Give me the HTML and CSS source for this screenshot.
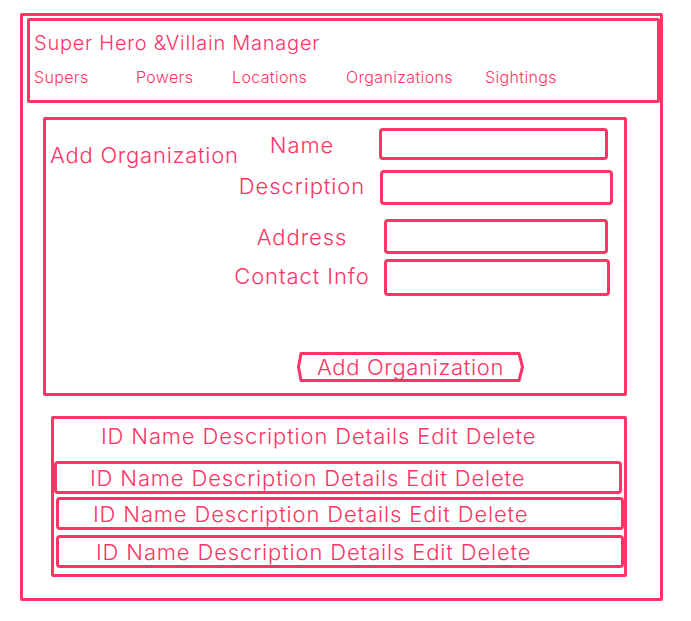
FILE: index.html
```html
<!DOCTYPE html>
<html lang="en">
<head>
<meta charset="utf-8">
<title>Super Hero &amp; Villain Manager</title>
<link rel="stylesheet" href="styles.css">
</head>
<body>
<div class="frame">
  <header class="header">
    <div class="title">Super Hero &amp;Villain Manager</div>
    <nav class="nav">
      <span>Supers</span>
      <span>Powers</span>
      <span>Locations</span>
      <span>Organizations</span>
      <span>Sightings</span>
    </nav>
  </header>

  <section class="form">
    <div class="form-heading">Add Organization</div>
    <div class="fields">
      <div class="row row1"><span class="label">Name</span><span class="input"></span></div>
      <div class="row row2"><span class="label">Description</span><span class="input"></span></div>
      <div class="row row3"><span class="label">Address</span><span class="input"></span></div>
      <div class="row row4"><span class="label">Contact Info</span><span class="input"></span></div>
      <div class="button">
        <svg class="button-shape" viewBox="0 0 227 30" preserveAspectRatio="none">
          <polygon points="4,1.5 222,1.5 225.5,15 222,28.5 4,28.5 1.5,15" fill="none" stroke="#ff3366" stroke-width="3" stroke-linejoin="round"/>
        </svg>
        <span class="button-text">Add Organization</span>
      </div>
    </div>
  </section>

  <section class="table">
    <div class="thead">ID Name Description Details Edit Delete</div>
    <div class="trow trow1">ID Name Description Details Edit Delete</div>
    <div class="trow trow2">ID Name Description Details Edit Delete</div>
    <div class="trow trow3">ID Name Description Details Edit Delete</div>
  </section>
</div>
</body>
</html>
```

FILE: styles.css
```css
* { box-sizing: border-box; }

html, body {
  margin: 0;
  padding: 0;
  background: #ffffff;
}

body {
  font-family: Inter, "Noto Sans", sans-serif;
  font-weight: 300;
  color: #ff3366;
}

.frame {
  margin: 13px 0 0 20px;
  width: 643px;
  height: 588px;
  border: 3px solid #ff3366;
  border-radius: 2px;
}

.header {
  margin: 2px 0 0 4px;
  width: 633px;
  height: 85px;
  border: 3px solid #ff3366;
  border-radius: 2px;
  padding: 10px 0 0 4px;
}

.title {
  font-size: 20px;
  line-height: 24px;
  letter-spacing: 0.75px;
  white-space: nowrap;
}

.nav {
  margin-top: 12px;
  display: grid;
  grid-template-columns: 102px 96px 114px 139px auto;
  font-size: 16px;
  line-height: 20px;
  letter-spacing: 0.35px;
  white-space: nowrap;
}

.form {
  margin: 14px 0 0 20px;
  width: 584px;
  height: 279px;
  border: 3px solid #ff3366;
  border-radius: 2px;
  padding: 8px 0 0 4px;
  display: flex;
}

.form-heading {
  width: 182px;
  margin-top: 14px;
  font-size: 22px;
  line-height: 26px;
  letter-spacing: 0.75px;
  white-space: nowrap;
}

.fields {
  display: flex;
  flex-direction: column;
}

.row {
  display: flex;
  align-items: center;
}

.label {
  width: 140px;
  text-align: center;
  font-size: 22px;
  line-height: 26px;
  letter-spacing: 0.9px;
  white-space: nowrap;
}

.input {
  display: block;
  border: 3px solid #ff3366;
  border-radius: 4px;
}

.row1 .label { position: relative; top: 1px; }
.row1 .input { margin-left: 7px; width: 229px; height: 32px; }
.row2 { margin-top: 10px; }
.row2 .label { position: relative; top: -2px; }
.row2 .input { margin-left: 8px; width: 233px; height: 35px; }
.row3 { margin-top: 14px; }
.row3 .input { margin-left: 12px; width: 224px; height: 35px; }
.row4 { margin-top: 5px; }
.row4 .label { position: relative; top: -2px; }
.row4 .input { margin-left: 12px; width: 226px; height: 37px; }

.button {
  position: relative;
  margin: 56px 0 0 65px;
  width: 227px;
  height: 30px;
  display: flex;
  align-items: center;
  justify-content: center;
}

.button-shape {
  position: absolute;
  left: 0;
  top: 0;
  width: 100%;
  height: 100%;
}

.button-text {
  position: relative;
  font-size: 22px;
  line-height: 26px;
  letter-spacing: 0.65px;
  white-space: nowrap;
}

.table {
  margin: 20px 0 0 28px;
  width: 576px;
  height: 161px;
  border: 3px solid #ff3366;
  border-radius: 2px;
  padding: 4px 0 0 0;
}

.thead,
.trow {
  font-size: 22px;
  line-height: 26px;
  letter-spacing: 0.85px;
  white-space: nowrap;
}

.thead {
  padding-left: 47px;
  height: 26px;
}

.trow {
  width: 568px;
  height: 33px;
  border: 3px solid #ff3366;
  border-radius: 4px;
  display: flex;
  align-items: center;
}

.trow1 { margin-top: 12px; padding-left: 33px; }
.trow2 { margin: 3px 0 0 2px; padding-left: 34px; }
.trow3 { margin: 5px 0 0 2px; padding-left: 37px; }
```
